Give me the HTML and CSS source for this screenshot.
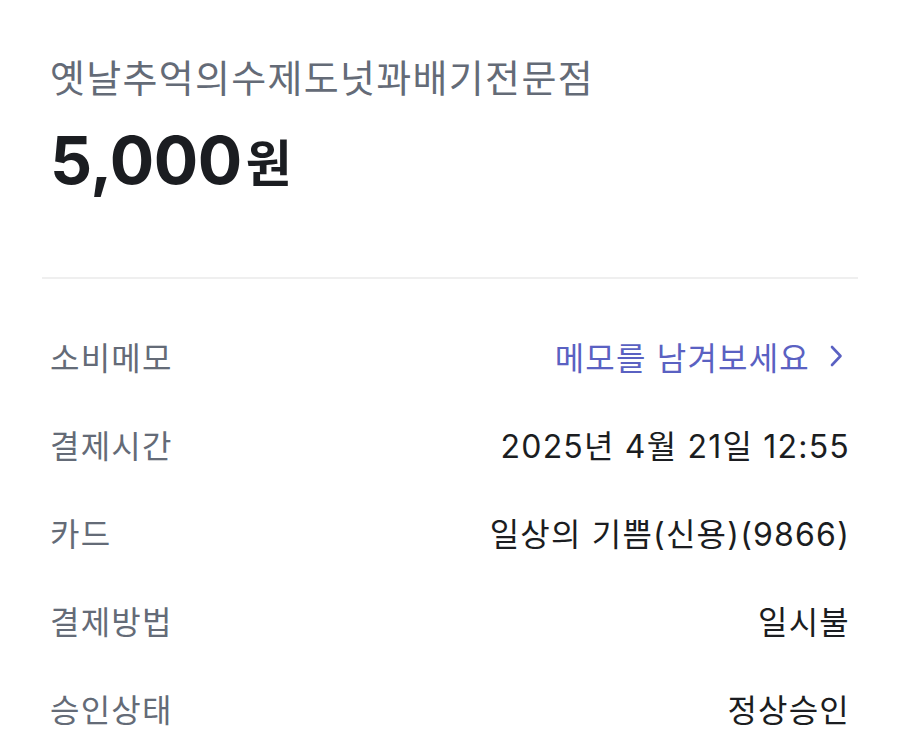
FILE: index.html
```html
<!DOCTYPE html>
<html lang="ko">
<head>
    <meta charset="UTF-8">
    <meta name="viewport" content="width=device-width, initial-scale=1.0">
    <title>결제 상세</title>
    <link rel="stylesheet" href="styles.css">
</head>
<body>
    <div class="container">
        <div class="summary">
            <div class="store-name">옛날추억의수제도넛꽈배기전문점</div>
            <div class="amount">
                <span class="amount-num">5,000</span><span class="amount-unit">원</span>
            </div>
        </div>

        <div class="divider"></div>

        <div class="detail-list">
            <div class="detail-row">
                <span class="detail-label">소비메모</span>
                <span class="detail-value memo">
                    메모를 남겨보세요
                    <svg class="chevron" width="16" height="24" viewBox="0 0 16 24" fill="none">
                        <path d="M4 3 L12.5 12 L4 21" stroke="currentColor" stroke-width="2.6" stroke-linecap="round" stroke-linejoin="round"/>
                    </svg>
                </span>
            </div>
            <div class="detail-row">
                <span class="detail-label">결제시간</span>
                <span class="detail-value">2025년 4월 21일 12:55</span>
            </div>
            <div class="detail-row">
                <span class="detail-label">카드</span>
                <span class="detail-value">일상의 기쁨(신용)(9866)</span>
            </div>
            <div class="detail-row">
                <span class="detail-label">결제방법</span>
                <span class="detail-value">일시불</span>
            </div>
            <div class="detail-row">
                <span class="detail-label">승인상태</span>
                <span class="detail-value">정상승인</span>
            </div>
        </div>
    </div>
</body>
</html>
```

FILE: styles.css
```css
:root {
    --text-main: #1b1d21;
    --text-sub: #646b77;
    --accent: #5a61c2;
    --line: #efefef;
}

body {
    margin: 0;
    background: #ffffff;
    color: var(--text-main);
    font-family: Inter, "Noto Sans CJK KR", sans-serif;
}

.container {
    padding: 55px 42px 0;
}

.summary {
    padding: 0 8px;
}

.store-name {
    font-size: 38px;
    line-height: 46px;
    color: var(--text-sub);
    letter-spacing: 1.3px;
}

.amount {
    margin-top: 19px;
    height: 80px;
    display: flex;
    align-items: center;
    font-weight: 700;
}

.amount-num {
    font-size: 66px;
    letter-spacing: -0.5px;
}

.amount-unit {
    font-size: 50px;
    margin-left: 4px;
}

.divider {
    margin-top: 77px;
    height: 2px;
    background: var(--line);
}

.detail-list {
    margin-top: 33px;
}

.detail-row {
    height: 88px;
    padding: 0 8px 0 8px;
    display: flex;
    align-items: center;
    justify-content: space-between;
    font-size: 32px;
    letter-spacing: 1.2px;
}

.detail-label {
    color: var(--text-sub);
}

.detail-value {
    color: var(--text-main);
}

.memo {
    color: var(--accent);
    display: flex;
    align-items: center;
    gap: 18px;
}

.chevron {
    margin-right: 6px;
}
```
